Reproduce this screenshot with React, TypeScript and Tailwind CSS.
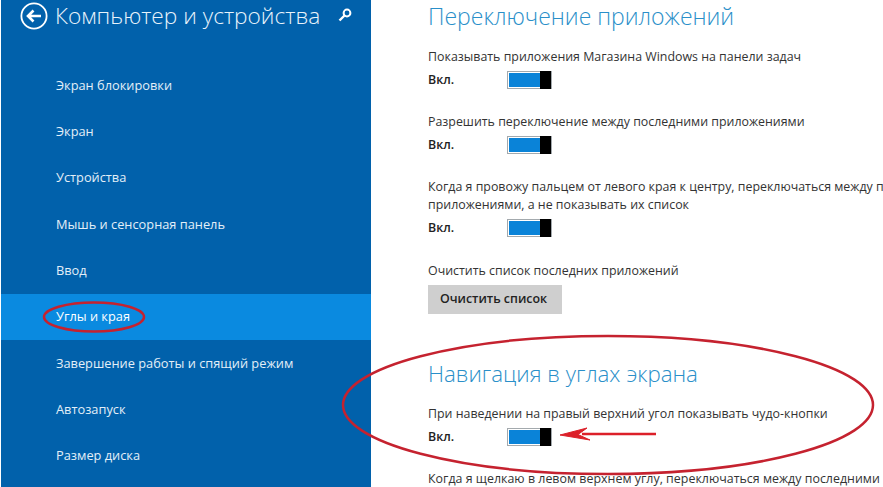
const navItems = [
  'Экран блокировки',
  'Экран',
  'Устройства',
  'Мышь и сенсорная панель',
  'Ввод',
  'Углы и края',
  'Завершение работы и спящий режим',
  'Автозапуск',
  'Размер диска',
];

function Toggle() {
  return (
    <div className="flex items-center">
      <span className="w-[79px] text-[12.4px] leading-[18px] font-semibold text-[#222]">Вкл.</span>
      <div className="flex h-[18px] w-[45px] border border-[#a3a9ad] bg-white p-[1px] pr-0">
        <div className="flex-1 bg-[#0a83d8]" />
        <div className="-my-[2px] w-[11px] bg-black" />
      </div>
    </div>
  );
}

function Setting({ label, className }: { label: React.ReactNode; className: string }) {
  return (
    <div className={className}>
      <p className="text-[12.4px] leading-[18px] whitespace-nowrap text-[#333]">{label}</p>
      <div className="mt-[5px]">
        <Toggle />
      </div>
    </div>
  );
}

export default function App() {
  return (
    <div className="relative flex h-[487px] w-[883px] overflow-hidden bg-white font-['Open_Sans','Noto_Sans',sans-serif]">
      <aside className="ml-px h-full w-[370px] shrink-0 bg-[#0161ab] text-white">
        <div className="flex h-[62px] items-start pt-[2px] pl-[19px]">
          <svg width="28" height="28" viewBox="0 0 28 28" fill="none" stroke="white" className="shrink-0">
            <circle cx="14" cy="14" r="12.6" strokeWidth="1.8" />
            <path d="M21 14H8M13.5 8.5L8 14l5.5 5.5" strokeWidth="2.6" />
          </svg>
          <h1 className="ml-[7px] text-[22.7px] leading-[28px] font-light whitespace-nowrap text-[#e8f3fb]">
            Компьютер и устройства
          </h1>
          <svg width="16" height="16" viewBox="0 0 16 16" fill="none" stroke="white" className="mt-[5px] ml-[17px] shrink-0">
            <circle cx="10" cy="6" r="3.4" strokeWidth="2" />
            <path d="M7.5 8.5L2.5 13.5" strokeWidth="2.4" />
          </svg>
        </div>
        <nav>
          {navItems.map((item) => (
            <div
              key={item}
              className={`flex h-[46.35px] items-center pl-[55px] text-[12.8px] whitespace-nowrap text-[#e3eff8] ${
                item === 'Углы и края' ? 'bg-[#0a8ae0] text-white' : ''
              }`}
            >
              {item}
            </div>
          ))}
        </nav>
      </aside>

      <main className="min-w-0 flex-1 pl-[57px]">
        <h2 className="mt-[1px] text-[23px] leading-[30px] font-light whitespace-nowrap text-[#2a8fc9]">Переключение приложений</h2>
        <Setting className="mt-[17px]" label="Показывать приложения Магазина Windows на панели задач" />
        <Setting className="mt-[24px]" label="Разрешить переключение между последними приложениями" />
        <Setting
          className="mt-[24px]"
          label={
            <>
              Когда я провожу пальцем от левого края к центру, переключаться между последними
              <br />
              приложениями, а не показывать их список
            </>
          }
        />
        <p className="mt-[25px] text-[12.4px] leading-[18px] whitespace-nowrap text-[#333]">Очистить список последних приложений</p>
        <button className="mt-[5px] flex h-[29px] w-[134px] items-center justify-center pr-[3px] bg-[#cfcfcf] text-[12.4px] font-semibold text-[#222]">
          Очистить список
        </button>
        <h2 className="mt-[45px] text-[22.3px] leading-[30px] font-light whitespace-nowrap text-[#2a8fc9]">Навигация в углах экрана</h2>
        <Setting className="mt-[16px]" label="При наведении на правый верхний угол показывать чудо-кнопки" />
        <p className="mt-[24px] text-[12.4px] leading-[18px] tracking-[0.02px] whitespace-nowrap text-[#333]">
          Когда я щелкаю в левом верхнем углу, переключаться между последними
        </p>
      </main>

      {/* hand-drawn red marks on top of the screenshot */}
      <svg width="883" height="487" viewBox="0 0 883 487" fill="none" stroke="#c5222f" className="pointer-events-none absolute inset-0">
        <ellipse cx="94" cy="317" rx="50" ry="14.5" strokeWidth="2.5" />
        <ellipse cx="608" cy="405" rx="265" ry="69" strokeWidth="2.5" />
        <path d="M656 434H582" stroke="#dc2029" strokeWidth="2.5" />
        <path d="M560 435L587 428L578 434.5L590 440Z" fill="#dc2029" stroke="#dc2029" strokeWidth="1" />
      </svg>
    </div>
  );
}
